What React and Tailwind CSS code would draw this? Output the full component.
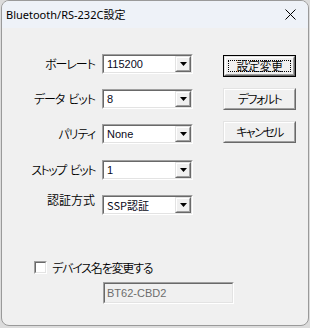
import React from "react";

const jp = "font-['Noto_Sans_CJK_JP',sans-serif] [font-feature-settings:'palt']";
const num = "font-['Liberation_Sans','Noto_Sans_CJK_JP',sans-serif]";

function Sunken({ className = "", innerClass = "", children }) {
  return (
    <div className={`border border-t-[#a0a0a0] border-l-[#a0a0a0] border-b-white border-r-white ${className}`}>
      <div className={`h-full border border-t-[#696969] border-l-[#696969] border-b-[#e3e3e3] border-r-[#e3e3e3] ${innerClass}`}>
        {children}
      </div>
    </div>
  );
}

function Raised({ className = "", innerClass = "", children }) {
  return (
    <div className={`border border-t-[#e3e3e3] border-l-[#e3e3e3] border-b-[#696969] border-r-[#696969] ${className}`}>
      <div className={`h-full border border-t-white border-l-white border-b-[#a0a0a0] border-r-[#a0a0a0] bg-[#f0f0f0] ${innerClass}`}>
        {children}
      </div>
    </div>
  );
}

function Combo({ value }) {
  return (
    <Sunken className="w-[91px] h-[20px]" innerClass="bg-white flex items-stretch">
      <div className={`flex-1 flex items-center pl-[3px] text-[11px] text-[#0a0a20] leading-none ${num}`}>
        {value}
      </div>
      <Raised className="w-[16px] h-full" innerClass="flex items-center justify-center">
        <svg width="7" height="4" viewBox="0 0 7 4">
          <polygon points="0,0 7,0 3.5,4" fill="#000" />
        </svg>
      </Raised>
    </Sunken>
  );
}

function Row({ label, value, className = "", labelClass = "" }) {
  return (
    <div className={`flex items-center ${className}`}>
      <div className={`w-[93px] text-right text-[12px] leading-none text-black font-[350] ${jp} ${labelClass}`}>{label}</div>
      <div className="ml-[7px]">
        <Combo value={value} />
      </div>
    </div>
  );
}

function Button({ label, isDefault }) {
  if (isDefault) {
    return (
      <div className="w-[73px] h-[22px] border border-black">
        <Raised className="h-full" innerClass="flex items-center justify-center p-[2px]">
          <div className={`w-full h-full flex items-center justify-center border border-dotted border-black text-[12px] leading-none font-[350] tracking-[-0.5px] ${jp}`}>
            {label}
          </div>
        </Raised>
      </div>
    );
  }
  return (
    <Raised className="w-[73px] h-[22px]" innerClass={`flex items-center justify-center text-[12px] leading-none font-[350] tracking-[-1.5px] ${jp}`}>
      {label}
    </Raised>
  );
}

export default function App() {
  return (
    <div className="w-[310px] h-[328px] bg-[#dcdcdc] pl-[1px]">
      <div className="w-[308px] h-[326px] rounded-[8px] border border-[#9a9a9a] bg-[#f0f0f0] overflow-hidden flex flex-col">
        <div className="h-[27px] bg-[#eef2f8] flex items-center justify-between pl-[4px] pr-[12px]">
          <span className="text-[11px] text-black font-['Noto_Sans','Noto_Sans_CJK_JP',sans-serif] leading-none">
            Bluetooth/RS-232C設定
          </span>
          <svg width="11" height="11" viewBox="0 0 11 11">
            <path d="M0.5 0.5 L10.5 10.5 M10.5 0.5 L0.5 10.5" stroke="#000" strokeWidth="1" />
          </svg>
        </div>
        <div className="flex-1 flex flex-col">
          <div className="flex pt-[26px]">
            <div className="flex flex-col">
              <Row label="ボーレート" value="115200" labelClass="tracking-[-1px]" />
              <Row
                label={<>データ<span className="ml-[4px]">ビット</span></>}
                value="8"
                className="mt-[15px]"
                labelClass="tracking-[-1px]"
              />
              <Row label="パリティ" value="None" className="mt-[15px]" labelClass="tracking-[-1px]" />
              <Row
                label={<>ストップ<span className="ml-[4px]">ビット</span></>}
                value="1"
                className="mt-[16px]"
                labelClass="tracking-[-1.5px]"
              />
              <Row label="認証方式" value={<span className={jp}>SSP認証</span>} className="mt-[15px]" labelClass="-mt-[10px]" />
            </div>
            <div className="ml-[30px] mt-[1px] flex flex-col gap-[11px]">
              <Button label="設定変更" isDefault />
              <Button label="デフォルト" />
              <Button label="キャンセル" />
            </div>
          </div>
          <div className="flex items-center mt-[46px] ml-[32px]">
            <Sunken className="w-[13px] h-[13px]" innerClass="bg-white" />
            <span className={`ml-[5px] text-[12px] leading-none font-[350] tracking-[-1.2px] ${jp}`}>デバイス名を変更する</span>
          </div>
          <div className="ml-[101px] mt-[8px]">
            <Sunken className="w-[131px] h-[22px]" innerClass="bg-[#f0f0f0] flex items-center pl-[2px]">
              <span className={`text-[11px] text-[#6d6d6d] leading-none ${num}`}>BT62-CBD2</span>
            </Sunken>
          </div>
        </div>
      </div>
    </div>
  );
}
